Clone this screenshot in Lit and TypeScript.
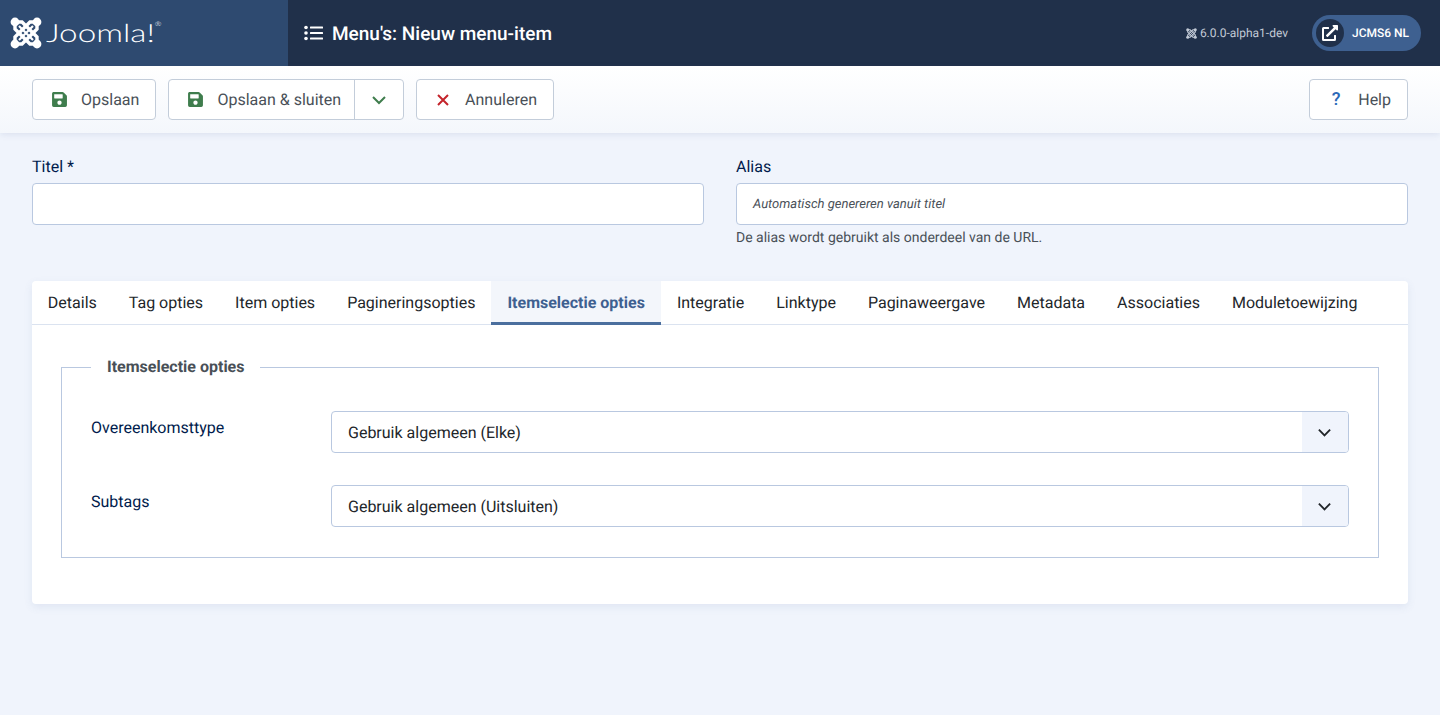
import { LitElement, css, html, svg } from 'lit';
import { customElement } from 'lit/decorators.js';

const saveIcon = html`<svg class="ico save" viewBox="0 0 448 512"><path fill="currentColor" d="M433.941 129.941l-83.882-83.882A48 48 0 0 0 316.118 32H48C21.49 32 0 53.49 0 80v352c0 26.51 21.49 48 48 48h352c26.51 0 48-21.49 48-48V163.882a48 48 0 0 0-14.059-33.941zM224 416c-35.346 0-64-28.654-64-64 0-35.346 28.654-64 64-64s64 28.654 64 64c0 35.346-28.654 64-64 64zm96-304.52V212c0 6.627-5.373 12-12 12H76c-6.627 0-12-5.373-12-12V108c0-6.627 5.373-12 12-12h228.52c3.183 0 6.235 1.264 8.485 3.515l3.48 3.48A11.996 11.996 0 0 1 320 111.48z"/></svg>`;

const chevron = (size: number) => html`<svg width=${size} height=${size} viewBox="0 0 16 16"><path d="M2 5l6 6 6-6" fill="none" stroke="currentColor" stroke-width="2"/></svg>`;

// joomla mark: knobs on the corners, four bands crossing and a thin X through the middle
const joomlaMark = (size: number, color: string) => html`<svg width=${size} height=${size} viewBox="0 0 32 32">
  ${svg`<g fill=${color}>
    <circle cx="5" cy="5" r="4.4"/><circle cx="27" cy="5" r="4.4"/>
    <circle cx="5" cy="27" r="4.4"/><circle cx="27" cy="27" r="4.4"/>
  </g>
  <g fill="none" stroke=${color} stroke-width="3.4">
    <path d="M5 5L5 12L20 27L27 27"/>
    <path d="M27 5L20 5L5 20L5 27"/>
    <path d="M5 5L12 5L27 20L27 27"/>
    <path d="M27 5L27 12L12 27L5 27"/>
    <path stroke-width="2.2" d="M9 9L23 23M23 9L9 23"/>
  </g>`}
</svg>`;

const tabs = [
  'Details',
  'Tag opties',
  'Item opties',
  'Pagineringsopties',
  'Itemselectie opties',
  'Integratie',
  'Linktype',
  'Paginaweergave',
  'Metadata',
  'Associaties',
  'Moduletoewijzing',
];

const fields = [
  { label: 'Overeenkomsttype', value: 'Gebruik algemeen (Elke)' },
  { label: 'Subtags', value: 'Gebruik algemeen (Uitsluiten)' },
];

@customElement('app-root')
export class AppRoot extends LitElement {
  static styles = css`
    :host {
      display: block;
      min-height: 715px;
      background: #f0f4fc;
      font-family: Roboto, "Liberation Sans", sans-serif;
      font-size: 16px;
      color: #22262a;
      text-rendering: geometricPrecision;
    }

    * {
      box-sizing: border-box;
    }

    .header {
      display: flex;
      align-items: center;
      height: 66px;
      background: #20304a;
      color: #fff;
    }

    .logo {
      display: flex;
      align-items: center;
      width: 288px;
      height: 100%;
      padding-left: 10px;
      background: #2e4a70;
    }

    .wordmark {
      position: relative;
      margin-left: 4px;
      font-family: Lato, sans-serif;
      font-weight: 300;
      font-size: 25px;
      line-height: 32px;
      transform: scaleX(1.33);
      transform-origin: left center;
    }

    .wordmark sup {
      position: absolute;
      top: 4px;
      right: -5px;
      font-size: 6px;
      line-height: 8px;
    }

    .title {
      display: flex;
      align-items: center;
      gap: 9px;
      padding-left: 16px;
      font-size: 19px;
      font-weight: 500;
    }

    .version {
      display: flex;
      align-items: center;
      gap: 3px;
      margin-left: auto;
      font-size: 12px;
      color: #c2cad6;
    }

    .site {
      display: flex;
      align-items: center;
      gap: 8px;
      width: 109px;
      height: 36px;
      margin: 0 19px 0 24px;
      padding-left: 4px;
      border-radius: 18px;
      background: #3e6090;
      font-size: 12px;
      font-weight: 500;
    }

    .site-icon {
      display: flex;
      align-items: center;
      justify-content: center;
      width: 28px;
      height: 28px;
      border-radius: 50%;
      background: #20304a;
    }

    .toolbar {
      display: flex;
      align-items: center;
      gap: 12px;
      height: 67px;
      padding: 0 32px;
      background: linear-gradient(#fff, #f4f7fc);
      box-shadow: 0 2px 6px rgba(80, 110, 160, 0.12);
    }

    .btn {
      display: flex;
      align-items: center;
      height: 41px;
      border: 1px solid #c3cdda;
      border-radius: 4px;
      background: #fff;
      color: #495057;
      font-size: 16px;
    }

    .btn-main {
      display: flex;
      align-items: center;
      height: 100%;
      padding: 0 16px;
    }

    .btn-main.split {
      padding-right: 13px;
    }

    .btn .ico-slot {
      display: flex;
      justify-content: center;
      width: 20px;
      margin-right: 12px;
    }

    .ico.save {
      width: 15px;
      height: 17px;
      color: #3f7d4d;
    }

    .btn-caret {
      display: flex;
      align-items: center;
      justify-content: center;
      width: 49px;
      height: 100%;
      border-left: 1px solid #c3cdda;
      color: #3f7d4d;
    }

    .spacer {
      margin-left: auto;
    }

    .help-mark {
      font-size: 18px;
      font-weight: 500;
      color: #2a69b8;
    }

    .main {
      padding: 0 32px;
    }

    .title-row {
      display: grid;
      grid-template-columns: 1fr 1fr;
      gap: 32px;
      padding-top: 22px;
      min-height: 148px;
    }

    .field-label {
      display: block;
      height: 28px;
      line-height: 23px;
      color: #001b4c;
    }

    .text-input {
      height: 42px;
      padding: 0 16px;
      border: 1px solid #b9c8e0;
      border-radius: 4px;
      background: #fff;
      display: flex;
      align-items: center;
      font-size: 13px;
      font-style: italic;
      color: #495057;
    }

    .hint {
      margin-top: 3px;
      font-size: 14px;
      line-height: 20px;
      color: #495057;
    }

    .card {
      height: 323px;
      border-radius: 4px;
      background: #fff;
      box-shadow: 0 3px 8px rgba(80, 110, 160, 0.1);
    }

    .tabs {
      display: flex;
      height: 44px;
      border-bottom: 1px solid #dbe3f0;
    }

    .tab {
      height: 44px;
      padding: 0 16px;
      line-height: 43px;
      color: #22262a;
    }

    .tab:first-child {
      margin-left: -0.2px;
    }

    .tab.active {
      border-bottom: 3px solid #4b6f9e;
      background: #f3f6fb;
      color: #3e6090;
      font-weight: 700;
    }

    .panel {
      padding: 30px 29px 0;
    }

    fieldset {
      margin: 0;
      min-width: 0;
      height: 203px;
      padding: 0 29px;
      border: 1px solid #b9c8e0;
    }

    legend {
      padding: 0 16px;
      margin: 0;
      font-weight: 700;
      line-height: 24px;
      color: #495057;
    }

    .rows {
      display: flex;
      flex-direction: column;
      gap: 32px;
      padding-top: 32px;
    }

    .row {
      display: grid;
      grid-template-columns: 240px 1fr;
    }

    .row-label {
      padding-top: 5px;
      line-height: 23px;
      color: #001b4c;
    }

    .select {
      display: flex;
      align-items: center;
      justify-content: space-between;
      height: 42px;
      padding-left: 16px;
      border: 1px solid #b9c8e0;
      border-radius: 4px;
      overflow: hidden;
      background: #fff;
      color: #22262a;
    }

    .select-caret {
      display: flex;
      align-items: center;
      justify-content: center;
      width: 46px;
      height: 100%;
      padding-right: 2px;
      background: #f0f4fc;
    }
  `;

  render() {
    return html`
      <div class="header">
        <div class="logo">
          ${joomlaMark(32, '#fff')}
          <div class="wordmark">Joomla!<sup>®</sup></div>
        </div>
        <div class="title">
          <svg width="19" height="16" viewBox="0 0 19 16">
            <g fill="#fff">
              <circle cx="2" cy="2.5" r="1.8"/><circle cx="2" cy="8" r="1.8"/><circle cx="2" cy="13.5" r="1.8"/>
              <rect x="6" y="1.4" width="13" height="2.2" rx="0.5"/>
              <rect x="6" y="6.9" width="13" height="2.2" rx="0.5"/>
              <rect x="6" y="12.4" width="13" height="2.2" rx="0.5"/>
            </g>
          </svg>
          Menu's: Nieuw menu-item
        </div>
        <div class="version">${joomlaMark(11, '#c2cad6')} 6.0.0-alpha1-dev</div>
        <div class="site">
          <span class="site-icon">
            <svg width="16" height="16" viewBox="0 0 512 512"><path fill="#fff" d="M432,320H400a16,16,0,0,0-16,16V448H64V128H208a16,16,0,0,0,16-16V80a16,16,0,0,0-16-16H48A48,48,0,0,0,0,112V464a48,48,0,0,0,48,48H400a48,48,0,0,0,48-48V336A16,16,0,0,0,432,320ZM488,0h-128c-21.37,0-32.05,25.91-17,41l35.73,35.73L135,320.37a24,24,0,0,0,0,34L157.67,377a24,24,0,0,0,34,0L435.28,133.32,471,169c15,15,41,4.5,41-17V24A24,24,0,0,0,488,0Z"/></svg>
          </span>
          JCMS6 NL
        </div>
      </div>

      <div class="toolbar">
        <div class="btn">
          <span class="btn-main"><span class="ico-slot">${saveIcon}</span>Opslaan</span>
        </div>
        <div class="btn">
          <span class="btn-main split"><span class="ico-slot">${saveIcon}</span>Opslaan &amp; sluiten</span>
          <span class="btn-caret">${chevron(16)}</span>
        </div>
        <div class="btn">
          <span class="btn-main">
            <span class="ico-slot">
              <svg width="12" height="12" viewBox="0 0 12 12"><path d="M1 1l10 10M11 1L1 11" stroke="#c4242b" stroke-width="2" fill="none"/></svg>
            </span>
            Annuleren
          </span>
        </div>
        <div class="btn spacer">
          <span class="btn-main"><span class="ico-slot help-mark">?</span>Help</span>
        </div>
      </div>

      <div class="main">
        <div class="title-row">
          <div>
            <label class="field-label">Titel *</label>
            <div class="text-input"></div>
          </div>
          <div>
            <label class="field-label">Alias</label>
            <div class="text-input">Automatisch genereren vanuit titel</div>
            <div class="hint">De alias wordt gebruikt als onderdeel van de URL.</div>
          </div>
        </div>

        <div class="card">
          <div class="tabs">
            ${tabs.map((t) => html`<div class="tab ${t === 'Itemselectie opties' ? 'active' : ''}">${t}</div>`)}
          </div>
          <div class="panel">
            <fieldset>
              <legend>Itemselectie opties</legend>
              <div class="rows">
                ${fields.map((f) => html`
                  <div class="row">
                    <div class="row-label">${f.label}</div>
                    <div class="select">
                      ${f.value}
                      <span class="select-caret">${chevron(15)}</span>
                    </div>
                  </div>
                `)}
              </div>
            </fieldset>
          </div>
        </div>
      </div>
    `;
  }
}
